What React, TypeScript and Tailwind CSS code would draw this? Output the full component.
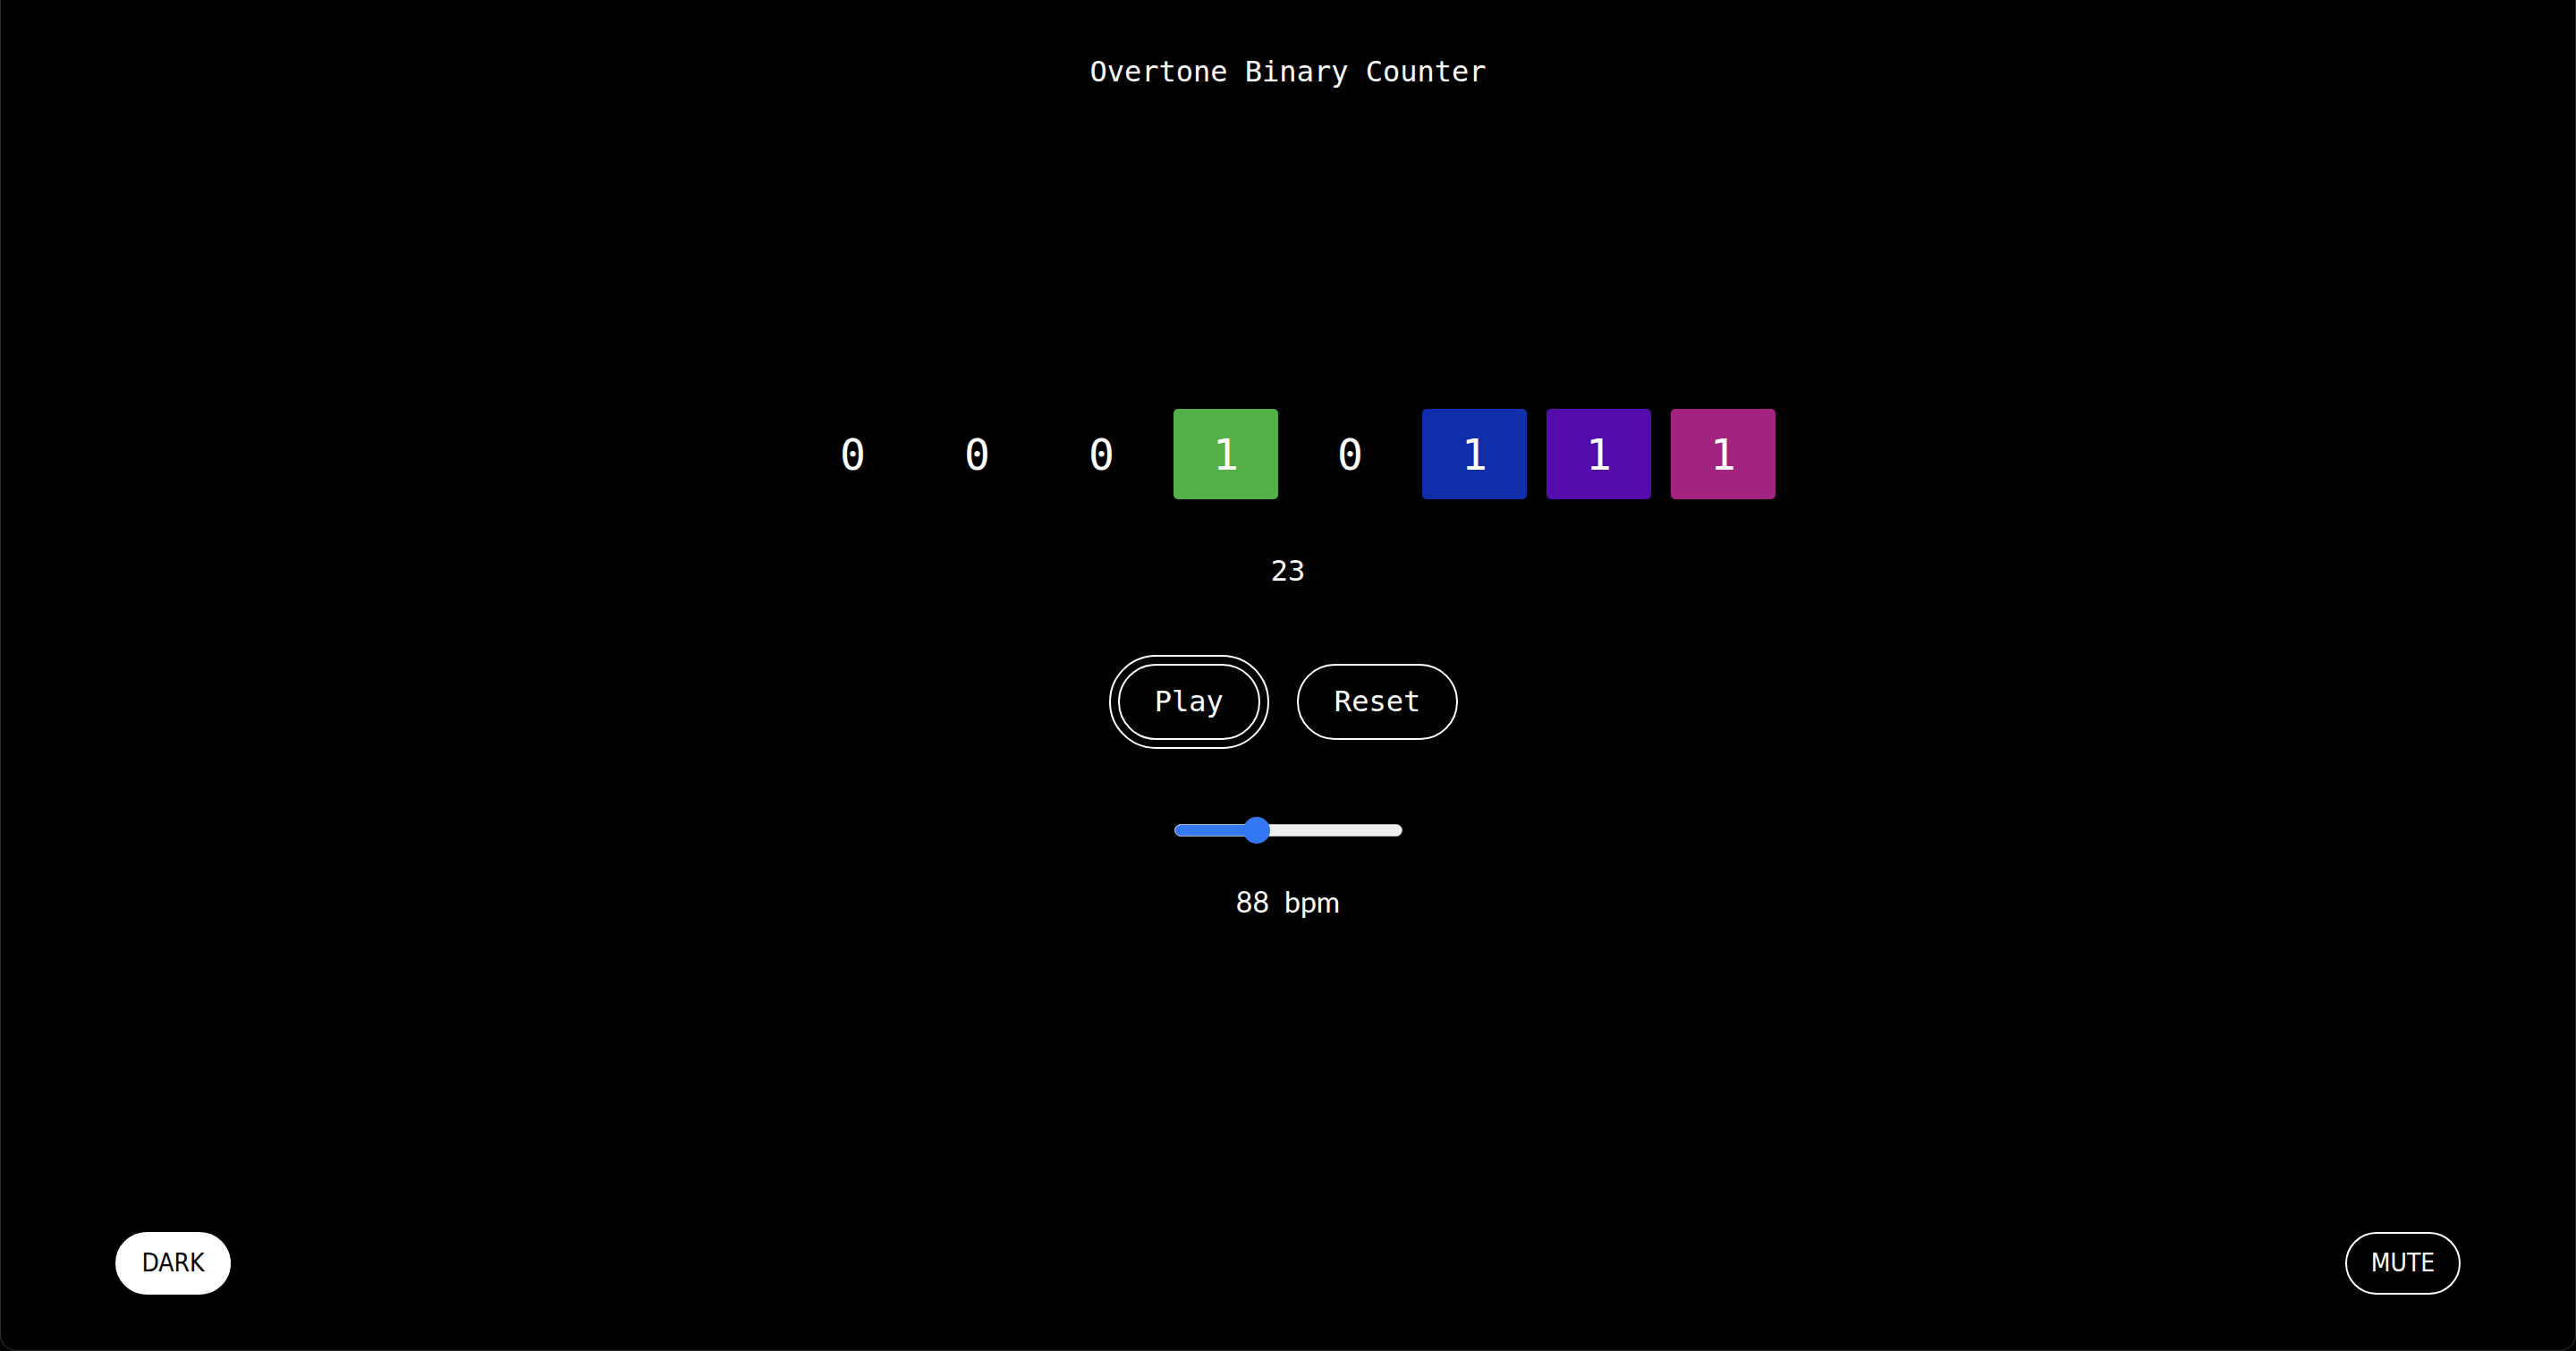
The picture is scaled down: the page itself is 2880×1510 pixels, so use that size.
import { useState } from 'react'

const mono = "font-['DejaVu_Sans_Mono',monospace]"

const bits = [
  { value: 0, color: '' },
  { value: 0, color: '' },
  { value: 0, color: '' },
  { value: 1, color: 'bg-[#52b047]' },
  { value: 0, color: '' },
  { value: 1, color: 'bg-[#102ea9]' },
  { value: 1, color: 'bg-[#530ca9]' },
  { value: 1, color: 'bg-[#a32380]' },
]

export default function App() {
  const [bpm] = useState(88)

  return (
    <div className="min-h-screen bg-black">
      <div className="min-h-screen flex flex-col items-center text-white bg-black border-x border-b border-[#2e2e2e] rounded-b-[18px]">
        <h1 className={`${mono} text-[32px] leading-[37px] font-normal pt-[62px]`}>Overtone Binary Counter</h1>

        <div className={`${mono} mt-[358px] flex gap-[22px]`}>
          {bits.map((bit, i) => (
            <div
              key={i}
              className={`w-[117px] h-[101px] rounded-[5px] flex items-center justify-center text-[48px] leading-[56px] ${bit.color}`}
            >
              {bit.value}
            </div>
          ))}
        </div>

        <div className={`${mono} mt-[62px] text-[32px] leading-[37px]`}>23</div>

        <div className={`${mono} mt-[85px] flex gap-[41px] text-[32px] leading-[37px]`}>
          <button className="h-[85px] px-[39px] rounded-full border-2 border-white bg-black text-white outline-2 outline-solid outline-white outline-offset-[8px]">
            Play
          </button>
          <button className="h-[85px] px-[40px] rounded-full border-2 border-white bg-black text-white">
            Reset
          </button>
        </div>

        <div className="mt-[86px] relative w-[255px] h-[30px] flex items-center">
          <div className="w-full h-[14px] rounded-full bg-[#efefef] border border-[#b4b4b4] overflow-hidden flex">
            <div className="w-[92px] h-full bg-[#3478f6]" />
          </div>
          <div className="absolute left-[77px] top-0 w-[30px] h-[30px] rounded-full bg-[#3478f6]" />
        </div>

        <div className="mt-[46px] font-['Lato',sans-serif] text-[32px] leading-[38px] flex gap-[17px]">
          <span>{bpm}</span>
          <span>bpm</span>
        </div>

        <div className="flex-1" />

        <div className="w-full flex justify-between px-[128px] pb-[62px] font-['Liberation_Sans_Narrow','DejaVu_Sans_Condensed',sans-serif] text-[28px]">
          <button className="w-[129px] h-[70px] rounded-full bg-white text-black border-2 border-white flex items-center justify-center">
            DARK
          </button>
          <button className="w-[129px] h-[70px] rounded-full bg-black text-white border-2 border-white flex items-center justify-center">
            MUTE
          </button>
        </div>
      </div>
    </div>
  )
}
